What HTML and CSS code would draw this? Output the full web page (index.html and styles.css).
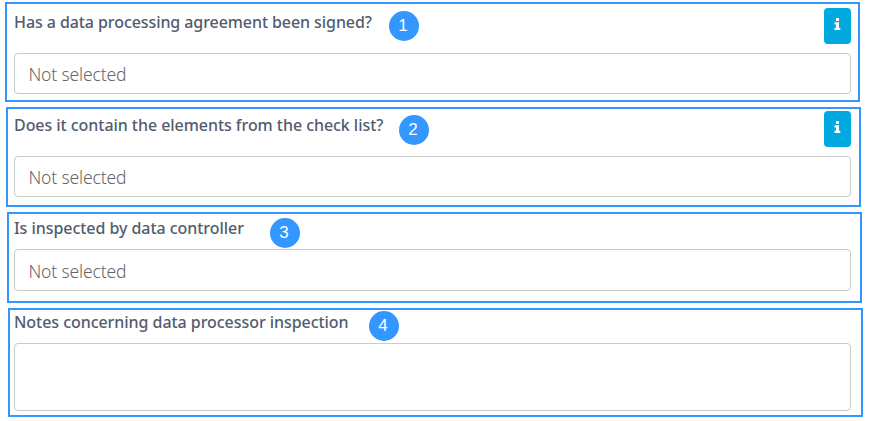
FILE: index.html
```html
<!DOCTYPE html>
<html lang="en">
<head>
  <meta charset="UTF-8">
  <meta name="viewport" content="width=device-width, initial-scale=1.0">
  <title>Data processor</title>
  <link rel="stylesheet" href="styles.css">
</head>
<body>
  <form class="form">
    <section class="field agreement">
      <div class="head">
        <label class="title" for="agreement">Has a data processing agreement been signed?</label>
        <span class="step">1</span>
        <button type="button" class="info" aria-label="Info">
          <svg width="7" height="12" viewBox="0 0 7 12"><path d="M2 0h3v3H2zM0.5 4.2H5v5.6h1.3V12H0.5V9.8H2V6.4H0.5z"/></svg>
        </button>
      </div>
      <div class="select" id="agreement">Not selected</div>
    </section>

    <section class="field checklist">
      <div class="head">
        <label class="title" for="checklist">Does it contain the elements from the check list?</label>
        <span class="step">2</span>
        <button type="button" class="info" aria-label="Info">
          <svg width="7" height="12" viewBox="0 0 7 12"><path d="M2 0h3v3H2zM0.5 4.2H5v5.6h1.3V12H0.5V9.8H2V6.4H0.5z"/></svg>
        </button>
      </div>
      <div class="select" id="checklist">Not selected</div>
    </section>

    <section class="field inspected">
      <div class="head">
        <label class="title" for="inspected">Is inspected by data controller</label>
        <span class="step">3</span>
      </div>
      <div class="select" id="inspected">Not selected</div>
    </section>

    <section class="field notes">
      <div class="head">
        <label class="title" for="notes">Notes concerning data processor inspection</label>
        <span class="step">4</span>
      </div>
      <textarea class="textarea" id="notes"></textarea>
    </section>
  </form>
</body>
</html>
```
FILE: styles.css
```css
* {
  box-sizing: border-box;
}

body {
  margin: 0;
  background: #fff;
  font-family: "Noto Sans", "Open Sans", sans-serif;
}

.form {
  display: flex;
  flex-direction: column;
  gap: 5px;
  padding-top: 2px;
}

.field {
  width: 855px;
  border: 2px solid #3397ff;
}

.head {
  display: flex;
  align-items: flex-start;
}

.title {
  flex: none;
  height: 24px;
  line-height: 24px;
  font-size: 16px;
  font-weight: 500;
  letter-spacing: -0.05px;
  color: #525c6e;
  white-space: nowrap;
}

.step {
  flex: none;
  width: 30px;
  height: 30px;
  padding-right: 2px;
  border-radius: 50%;
  background: #3397ff;
  color: #fff;
  font: 17px/30px "Liberation Sans", Arial, sans-serif;
  text-align: center;
}

.info {
  display: flex;
  justify-content: center;
  width: 27px;
  height: 36px;
  margin-left: auto;
  padding: 10px 0 0;
  border: none;
  border-radius: 4px;
  background: #00a9e0;
}

.info svg {
  fill: #fff;
}

.select,
.textarea {
  display: block;
  width: 837px;
  border: 1px solid #c9c9c9;
  border-radius: 4px;
  background: #fff;
}

.select {
  height: 41px;
  padding-left: 13.5px;
  line-height: 40px;
  font-size: 17.5px;
  font-weight: 300;
  letter-spacing: -0.15px;
  color: #666;
}

.textarea {
  height: 68px;
  resize: none;
}

/* each frame sits 1px further right, the controls stay in one column */
.agreement {
  height: 100px;
  margin-left: 5px;
  padding: 4px 7px 0;
}

.checklist {
  height: 100px;
  margin-left: 6px;
  padding: 2px 8px 0 6px;
}

.inspected {
  height: 91px;
  margin-left: 7px;
  padding: 0 9px 0 5px;
}

.inspected .select {
  height: 42px;
  line-height: 42px;
}

.notes {
  height: 109px;
  margin-left: 8px;
  padding: 0 10px 0 4px;
}

.agreement .head,
.checklist .head {
  height: 45px;
}

.inspected .head {
  height: 35px;
}

.notes .head {
  height: 33px;
}

.agreement .title {
  width: 375px;
  margin-top: 2px;
  letter-spacing: -0.08px;
}

.checklist .title {
  width: 385px;
  margin-top: 2px;
}

.inspected .title {
  width: 256px;
  margin-top: 2px;
}

.notes .title {
  width: 355px;
}

.agreement .step {
  margin-top: 3px;
}

.checklist .step {
  margin-top: 4px;
}

.inspected .step {
  margin-top: 4px;
}

.notes .step {
  margin-top: 1px;
}
```
